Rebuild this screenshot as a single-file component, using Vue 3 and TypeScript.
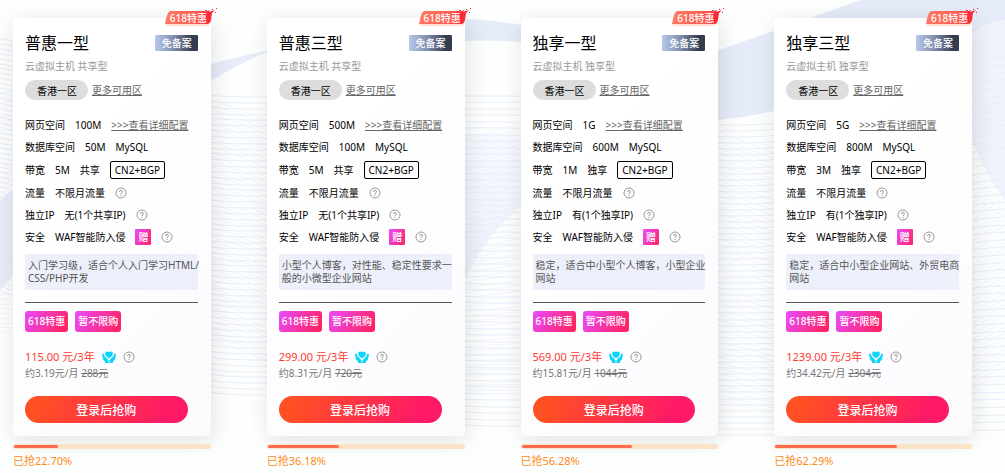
<script setup lang="ts">
interface Plan {
  name: string
  kind: string
  space: string
  database: string
  bandwidth: string
  share: string
  ip: string
  summary: string
  price: string
  monthly: string
  original: string
  sold: string
}

const plans: Plan[] = [
  { name: '普惠一型', kind: '共享型', space: '100M', database: '50M', bandwidth: '5M', share: '共享', ip: '无(1个共享IP)', summary: '入门学习级，适合个人入门学习HTML/\nCSS/PHP开发', price: '115.00', monthly: '3.19', original: '288', sold: '22.70' },
  { name: '普惠三型', kind: '共享型', space: '500M', database: '100M', bandwidth: '5M', share: '共享', ip: '无(1个共享IP)', summary: '小型个人博客，对性能、稳定性要求一\n般的小微型企业网站', price: '299.00', monthly: '8.31', original: '720', sold: '36.18' },
  { name: '独享一型', kind: '独享型', space: '1G', database: '600M', bandwidth: '1M', share: '独享', ip: '有(1个独享IP)', summary: '稳定，适合中小型个人博客，小型企业\n网站', price: '569.00', monthly: '15.81', original: '1044', sold: '56.28' },
  { name: '独享三型', kind: '独享型', space: '5G', database: '800M', bandwidth: '3M', share: '独享', ip: '有(1个独享IP)', summary: '稳定，适合中小型企业网站、外贸电商\n网站', price: '1239.00', monthly: '34.42', original: '2304', sold: '62.29' },
]

function wave(stops: number[][], t: number): string {
  return stops
    .map(([x, top, spread], i) => {
      const y = Math.round(top + spread * t)
      if (i === 0) return `M${x} ${y}`
      const [px, ptop, pspread] = stops[i - 1]
      const mid = (px + x) / 2
      return `C${mid} ${Math.round(ptop + pspread * t)} ${mid} ${y} ${x} ${y}`
    })
    .join(' ')
}

const steps = Array.from({ length: 52 }, (_, i) => i / 51)
const waves = steps.map((t) => wave([[-60, 35, 250], [250, 97, 298], [500, 96, 330], [740, 125, 310], [1040, 40, 390]], t))
const crossWaves = steps.map((t) => wave([[-120, 90, 240], [160, 96, 240], [380, 150, 240], [620, 110, 280], [860, 160, 260], [1100, 60, 300]], t))
</script>

<template>
  <main class="page">
    <svg class="backdrop" viewBox="0 0 1005 473" preserveAspectRatio="none" aria-hidden="true">
      <defs>
        <linearGradient id="fold" x1="0" y1="0" x2="0" y2="1">
          <stop offset="0" stop-color="#f8faff" />
          <stop offset="1" stop-color="#e9eefa" />
        </linearGradient>
      </defs>
      <path d="M0 290 V200 Q60 150 211 64 Q240 56 275 49 Q240 62 211 81 Q100 170 0 290 Z" fill="#e6ecf8" />
      <path d="M380 30 Q430 19 465 19 Q500 20 560 32 Q650 62 719 50 Q800 22 860 0 H1005 V35 Q960 50 900 70 Q800 112 719 120 Q640 90 560 50 Q520 38 465 41 Z" fill="#e5ebf8" />
      <path d="M440 140 Q490 125 560 145 Q530 200 500 225 Q470 260 440 330 Z" fill="url(#fold)" />
      <path d="M940 60 Q980 20 1005 20 V200 Q980 170 940 60 Z" fill="#f0f3fb" />
      <g fill="none" stroke="#eaeef9" stroke-width="1">
        <path v-for="d in waves" :key="d" :d="d" />
        <path v-for="d in crossWaves" :key="d" :d="d" opacity=".5" />
      </g>
    </svg>

    <section class="plans">
      <article v-for="plan in plans" :key="plan.name" class="plan">
        <div class="card">
          <div class="ribbon">
            <svg viewBox="0 0 54 20" aria-hidden="true">
              <defs>
                <linearGradient id="ribbon" x1="0" y1="0" x2="1" y2="0">
                  <stop offset="0" stop-color="#ff7a62" />
                  <stop offset=".65" stop-color="#ff5a50" />
                  <stop offset=".85" stop-color="#ff2838" />
                </linearGradient>
              </defs>
              <path d="M1 15 L46 15 L45 18 L2 18 Z" fill="#ffd9c8" opacity=".8" />
              <path d="M4 5 Q5 3 7 3 L37 3 L42 3 L41 4 L46 2 L45 4 L51 2 L48 5 L47 12 Q46 16 43 16 L1 16 Q2 9 4 5 Z" fill="url(#ribbon)" />
              <path d="M41 2h2v1h-2z M48 1h1v1h-1z M52 0h1v1h-1z M51 4h1v1h-1z" fill="#f5303c" />
            </svg>
            <span>618特惠</span>
          </div>

          <header class="head">
            <h2>{{ plan.name }}</h2>
            <span class="exempt">免备案</span>
          </header>
          <p class="kind">云虚拟主机 {{ plan.kind }}</p>
          <div class="zone">
            <button type="button" class="pill">香港一区</button>
            <a href="#">更多可用区</a>
          </div>

          <ul class="specs">
            <li><span>网页空间</span><span>{{ plan.space }}</span><a href="#">&gt;&gt;&gt;查看详细配置</a></li>
            <li><span>数据库空间</span><span>{{ plan.database }}</span><span>MySQL</span></li>
            <li class="tall"><span>带宽</span><span>{{ plan.bandwidth }}</span><span>{{ plan.share }}</span><span class="line">CN2+BGP</span></li>
            <li>
              <span>流量</span><span>不限月流量</span>
              <svg class="help" viewBox="0 0 12 12" aria-hidden="true"><circle cx="6" cy="6" r="5" /><path d="M4.5 5 Q4.5 3.5 6 3.5 T7.5 4.8 Q7.5 5.5 6 6.5 V7.2 M6 8v1" /></svg>
            </li>
            <li>
              <span>独立IP</span><span>{{ plan.ip }}</span>
              <svg class="help" viewBox="0 0 12 12" aria-hidden="true"><circle cx="6" cy="6" r="5" /><path d="M4.5 5 Q4.5 3.5 6 3.5 T7.5 4.8 Q7.5 5.5 6 6.5 V7.2 M6 8v1" /></svg>
            </li>
            <li>
              <span>安全</span><span>WAF智能防入侵</span><span class="gift">赠</span>
              <svg class="help" viewBox="0 0 12 12" aria-hidden="true"><circle cx="6" cy="6" r="5" /><path d="M4.5 5 Q4.5 3.5 6 3.5 T7.5 4.8 Q7.5 5.5 6 6.5 V7.2 M6 8v1" /></svg>
            </li>
          </ul>

          <p class="summary">{{ plan.summary }}</p>

          <div class="tags"><span>618特惠</span><span>暂不限购</span></div>

          <div class="price">
            <strong>{{ plan.price }} 元/3年</strong>
            <svg class="hands" viewBox="0 0 14 12" aria-hidden="true">
              <path d="M3.5 1 Q5 0 7 1 Q9 0 10.5 1 Q11.5 4 9.5 5.6 L7 7.6 L4.5 5.6 Q2.5 4 3.5 1 Z" />
              <path d="M0 3 L1.6 2.6 L2.6 5.2 L5 7.4 L6.6 9.6 V12 H3 V10.4 L1 8.4 Z M14 3 L12.4 2.6 L11.4 5.2 L9 7.4 L7.4 9.6 V12 H11 V10.4 L13 8.4 Z" />
            </svg>
            <svg class="help" viewBox="0 0 12 12" aria-hidden="true"><circle cx="6" cy="6" r="5" /><path d="M4.5 5 Q4.5 3.5 6 3.5 T7.5 4.8 Q7.5 5.5 6 6.5 V7.2 M6 8v1" /></svg>
          </div>
          <p class="monthly">约{{ plan.monthly }}元/月 <del>{{ plan.original }}元</del></p>
          <button type="button" class="buy">登录后抢购</button>
        </div>

        <div class="track"><div class="bar" :style="{ width: plan.sold + '%' }"></div></div>
        <p class="sold">已抢{{ plan.sold }}%</p>
      </article>
    </section>
  </main>
</template>

<style>
body {
  background: #fdfefe;
}
</style>

<style scoped>
.page {
  position: relative;
  overflow: hidden;
  min-height: 100vh;
  font: 10px/14px "Noto Sans", "Noto Sans CJK SC", sans-serif;
  color: #000;
}
.backdrop {
  position: absolute;
  inset: 0;
  width: 100%;
  height: 100%;
}
.plans {
  position: relative;
  display: grid;
  grid-template-columns: repeat(4, minmax(0, 1fr));
  gap: 56px;
  padding: 18px 33px 0 13px;
}
h2,
p,
ul {
  margin: 0;
  padding: 0;
  font-weight: 400;
}
.card {
  position: relative;
  padding: 12px 13px 13px 12px;
  border-radius: 5px;
  background: linear-gradient(135deg, #fff 30%, #fbfbfe);
  box-shadow: 2px 4px 22px rgba(0, 0, 0, 0.12);
  white-space: nowrap;
}
.ribbon {
  position: absolute;
  top: -10px;
  right: -7px;
  width: 54px;
  height: 20px;
}
.ribbon svg {
  display: block;
  width: 100%;
}
.ribbon span {
  position: absolute;
  top: 3px;
  left: 6px;
  color: #fff;
  font-weight: 500;
}
.head {
  display: flex;
  align-items: center;
  justify-content: space-between;
  height: 26px;
}
.head h2 {
  font-size: 16px;
  line-height: 26px;
}
.exempt {
  padding: 0 6px 0 7px;
  border-radius: 1px;
  background: linear-gradient(90deg, #b9c7ea, #8492b4 40%, #343d50 85%);
  color: #fff;
  font-weight: 500;
  line-height: 16px;
}
.kind {
  color: #999;
  line-height: 20px;
}
.zone {
  display: flex;
  align-items: center;
  gap: 4px;
  margin-top: 4px;
}
a {
  color: #666;
  text-decoration: underline;
}
button {
  border: 0;
  font-family: inherit;
  cursor: pointer;
}
.pill {
  height: 20px;
  padding: 0 11px 0 12px;
  border-radius: 10px;
  background: #ddd;
  color: #000;
  font-size: 10px;
}
.specs {
  margin-top: 14px;
  list-style: none;
}
.specs li {
  display: flex;
  align-items: center;
  gap: 10px;
  height: 22px;
}
.specs .tall {
  height: 24px;
}
.line {
  padding: 0 4px;
  border: 1px solid #000;
  border-radius: 2px;
  line-height: 16px;
}
.gift {
  width: 16px;
  border-radius: 1px;
  background: linear-gradient(120deg, #e94bff, #ff2366);
  color: #fff;
  font-weight: 500;
  line-height: 16px;
  text-align: center;
}
.help {
  width: 12px;
  height: 12px;
  fill: none;
  stroke: #999;
  stroke-width: 1;
}
.summary {
  margin-top: 6px;
  padding: 5px 0 5px 3px;
  background: #edf0fa;
  color: #555;
  line-height: 13px;
  white-space: pre;
}
.tags {
  display: flex;
  gap: 7px;
  margin-top: 12px;
  padding-top: 8px;
  border-top: 1px solid #555;
}
.tags span {
  padding: 0 3px;
  border-radius: 3px;
  background: linear-gradient(120deg, #e94bff, #ff2366 90%);
  color: #fff;
  font-weight: 500;
  line-height: 21px;
}
.price {
  display: flex;
  align-items: center;
  height: 18px;
  margin-top: 16px;
}
.price strong {
  color: #ff3b30;
  font-size: 11px;
  font-weight: 400;
}
.hands {
  width: 14px;
  height: 12px;
  margin: 0 7px;
  fill: #10d3fa;
}
.monthly {
  color: #777;
}
.buy {
  display: block;
  width: calc(100% - 10px);
  height: 27px;
  margin-top: 16px;
  border-radius: 14px;
  background: linear-gradient(110deg, #ff5023 10%, #ff1a66 85%);
  color: #fff;
  font-size: 12px;
  font-weight: 500;
}
.track {
  position: relative;
  padding: 1px;
  margin-top: 8px;
  border-radius: 3px;
  background: #fde3c6;
}
.bar {
  height: 3px;
  border-radius: 2px;
  background: #ff6b4f;
}
.sold {
  position: relative;
  color: #ff8c1a;
  font-size: 11px;
  line-height: 24px;
}
</style>
